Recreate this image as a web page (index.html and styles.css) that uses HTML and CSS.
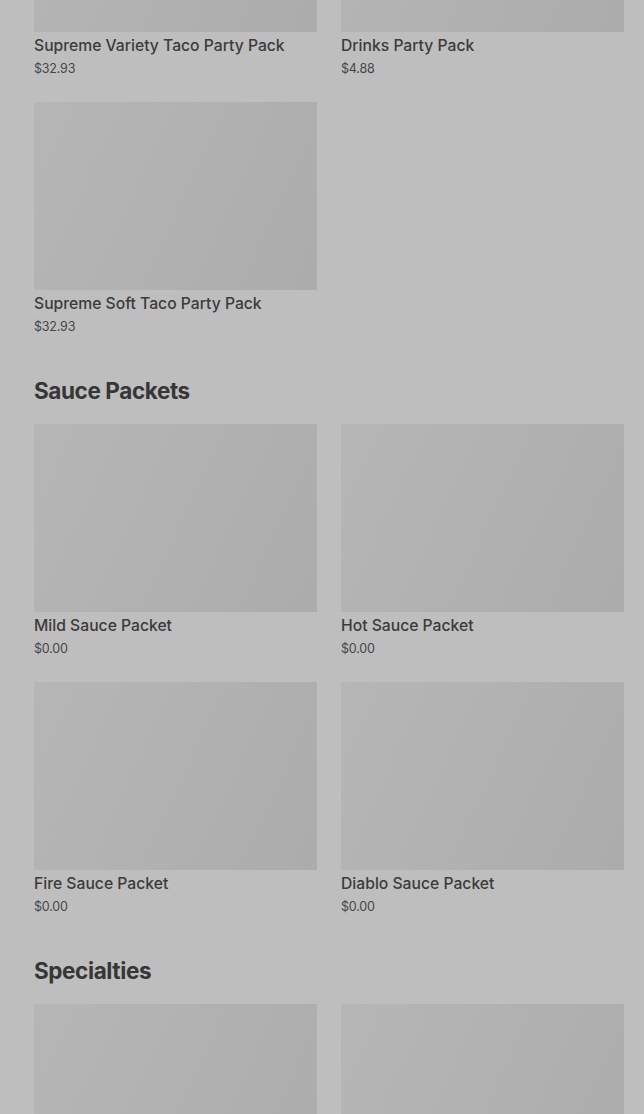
FILE: index.html
```html
<!DOCTYPE html>
<html lang="en">
<head>
    <meta charset="UTF-8">
    <meta name="viewport" content="width=device-width, initial-scale=1.0">
    <title>Menu</title>
    <link rel="stylesheet" href="styles.css">
</head>
<body>

    <div class="menu">

        <section class="section first">
            <div class="grid">
                <div class="item">
                    <div class="thumb"></div>
                    <div class="name">Supreme Variety Taco Party Pack</div>
                    <div class="price">$32.93</div>
                </div>
                <div class="item">
                    <div class="thumb"></div>
                    <div class="name">Drinks Party Pack</div>
                    <div class="price">$4.88</div>
                </div>
                <div class="item">
                    <div class="thumb"></div>
                    <div class="name">Supreme Soft Taco Party Pack</div>
                    <div class="price">$32.93</div>
                </div>
            </div>
        </section>

        <section class="section">
            <h2>Sauce Packets</h2>
            <div class="grid">
                <div class="item">
                    <div class="thumb"></div>
                    <div class="name">Mild Sauce Packet</div>
                    <div class="price">$0.00</div>
                </div>
                <div class="item">
                    <div class="thumb"></div>
                    <div class="name">Hot Sauce Packet</div>
                    <div class="price">$0.00</div>
                </div>
                <div class="item">
                    <div class="thumb"></div>
                    <div class="name">Fire Sauce Packet</div>
                    <div class="price">$0.00</div>
                </div>
                <div class="item">
                    <div class="thumb"></div>
                    <div class="name">Diablo Sauce Packet</div>
                    <div class="price">$0.00</div>
                </div>
            </div>
        </section>

        <section class="section">
            <h2>Specialties</h2>
            <div class="grid">
                <div class="item">
                    <div class="thumb"></div>
                </div>
                <div class="item">
                    <div class="thumb"></div>
                </div>
            </div>
        </section>

    </div>

</body>
</html>
```

FILE: styles.css
```css
body {
    margin: 0;
    padding: 0;
    background-color: #bebebe;
    font-family: "Inter", "Liberation Sans", Arial, sans-serif;
    color: #3a3a3a;
    overflow: hidden;
}

.menu {
    padding: 0 20px 0 34px;
    margin-top: -156px;
}

.section {
    margin-top: 38px;
}

.section.first {
    margin-top: 0;
}

h2 {
    margin: 0 0 17px 0;
    font-size: 22.5px;
    line-height: 32px;
    font-weight: 700;
    letter-spacing: -0.4px;
    color: #363636;
}

.grid {
    display: grid;
    grid-template-columns: 1fr 1fr;
    column-gap: 24px;
    row-gap: 23px;
}

.thumb {
    height: 188px;
    background: linear-gradient(115deg, #b6b6b6 0%, #b1b1b1 50%, #acacac 100%);
}

.name {
    margin-top: 4px;
    font-size: 15.7px;
    line-height: 20px;
    font-weight: 500;
    color: #3b3b3b;
}

.price {
    margin-top: 3px;
    font-size: 12.5px;
    line-height: 20px;
    letter-spacing: -0.2px;
    color: #474747;
}
```
